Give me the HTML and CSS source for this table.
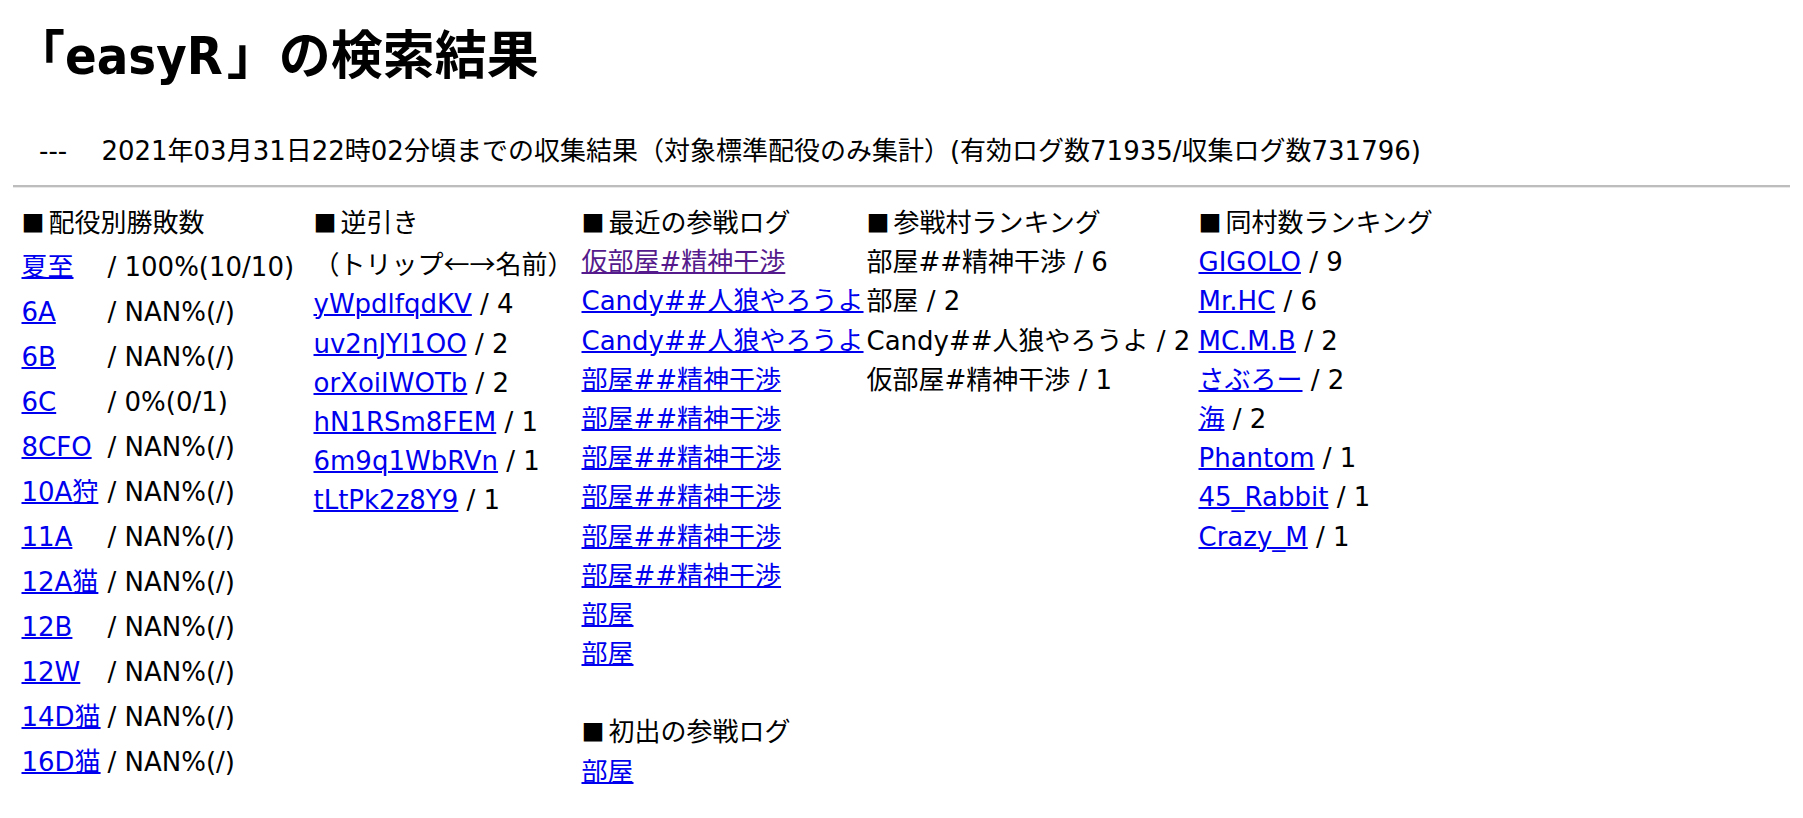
FILE: index.html
```html
<!DOCTYPE html>
<html lang="ja">
<head>
<meta charset="utf-8">
<title>「easyR」の検索結果</title>
<link rel="stylesheet" href="styles.css">
</head>
<body>
<h1 class="title">「<span class="latin">easyR</span>」の検索結果</h1>
<p class="info">　---　 2021年03月31日22時02分頃までの収集結果（対象標準配役のみ集計）(有効ログ数71935/収集ログ数731796)</p>
<hr class="rule">
<div class="cols">
  <section class="col">
    <div class="head"><span class="mark">■</span>配役別勝敗数</div>
    <div class="roles">
      <a href="#">夏至</a><span>/ 100%(10/10)</span>
      <a href="#">6A</a><span>/ NAN%(/)</span>
      <a href="#">6B</a><span>/ NAN%(/)</span>
      <a href="#">6C</a><span>/ 0%(0/1)</span>
      <a href="#">8CFO</a><span>/ NAN%(/)</span>
      <a href="#">10A狩</a><span>/ NAN%(/)</span>
      <a href="#">11A</a><span>/ NAN%(/)</span>
      <a href="#">12A猫</a><span>/ NAN%(/)</span>
      <a href="#">12B</a><span>/ NAN%(/)</span>
      <a href="#">12W</a><span>/ NAN%(/)</span>
      <a href="#">14D猫</a><span>/ NAN%(/)</span>
      <a href="#">16D猫</a><span>/ NAN%(/)</span>
    </div>
  </section>
  <section class="col">
    <div class="head"><span class="mark">■</span>逆引き</div>
    <div class="list">
      <div>（トリップ<span class="cj">←→</span>名前）</div>
      <div><a href="#">yWpdlfqdKV</a> / 4</div>
      <div><a href="#">uv2nJYl1OO</a> / 2</div>
      <div><a href="#">orXoiIWOTb</a> / 2</div>
      <div><a href="#">hN1RSm8FEM</a> / 1</div>
      <div><a href="#">6m9q1WbRVn</a> / 1</div>
      <div><a href="#">tLtPk2z8Y9</a> / 1</div>
    </div>
  </section>
  <section class="col">
    <div class="head"><span class="mark">■</span>最近の参戦ログ</div>
    <div class="list">
      <a class="visited" href="#">仮部屋#精神干渉</a>
      <a href="#">Candy##人狼やろうよ</a>
      <a href="#">Candy##人狼やろうよ</a>
      <a href="#">部屋##精神干渉</a>
      <a href="#">部屋##精神干渉</a>
      <a href="#">部屋##精神干渉</a>
      <a href="#">部屋##精神干渉</a>
      <a href="#">部屋##精神干渉</a>
      <a href="#">部屋##精神干渉</a>
      <a href="#">部屋</a>
      <a href="#">部屋</a>
    </div>
    <div class="head gap"><span class="mark">■</span>初出の参戦ログ</div>
    <div class="list">
      <a href="#">部屋</a>
    </div>
  </section>
  <section class="col">
    <div class="head"><span class="mark">■</span>参戦村ランキング</div>
    <div class="list">
      <div>部屋##精神干渉 / 6</div>
      <div>部屋 / 2</div>
      <div>Candy##人狼やろうよ / 2</div>
      <div>仮部屋#精神干渉 / 1</div>
    </div>
  </section>
  <section class="col">
    <div class="head"><span class="mark">■</span>同村数ランキング</div>
    <div class="list">
      <div><a href="#">GIGOLO</a> / 9</div>
      <div><a href="#">Mr.HC</a> / 6</div>
      <div><a href="#">MC.M.B</a> / 2</div>
      <div><a href="#">さぶろー</a> / 2</div>
      <div><a href="#">海</a> / 2</div>
      <div><a href="#">Phantom</a> / 1</div>
      <div><a href="#">45_Rabbit</a> / 1</div>
      <div><a href="#">Crazy_M</a> / 1</div>
    </div>
  </section>
</div>
</body>
</html>
```

FILE: styles.css
```css
html {
  background: #ffffff;
}

body {
  margin: 0;
  padding: 0 13px;
  font-family: "DejaVu Sans", "Noto Sans CJK JP", sans-serif;
  font-size: 26px;
  color: #000000;
}

.title {
  margin: 17px 0 0;
  font-size: 52px;
  line-height: 78px;
  font-weight: bold;
}

.title .latin {
  font-family: "DejaVu Sans Condensed", "DejaVu Sans", sans-serif;
  font-stretch: condensed;
  margin-right: 4px;
}

.info {
  margin: 36.5px 0 0;
  line-height: 39px;
  white-space: nowrap;
}

.rule {
  margin: 14.5px 0 0;
  height: 0;
  border: 0;
  border-top: 2px solid #bdbdbd;
  border-bottom: 1px solid #e8e8e8;
}

.cols {
  display: grid;
  grid-template-columns: 292px 268px 285px 332px auto;
  align-items: start;
  margin-top: 15px;
  padding-left: 8.5px;
}

.col {
  line-height: 39.2px;
  white-space: nowrap;
}

.mark {
  font-family: "Noto Sans CJK JP", sans-serif;
  font-size: 23px;
  margin-right: 4px;
}

.cj {
  font-family: "Noto Sans CJK JP", sans-serif;
}

.roles {
  display: grid;
  grid-template-columns: 86px auto;
  justify-items: start;
  line-height: 45px;
  margin-top: 2px;
}

.list {
  display: flex;
  flex-direction: column;
  align-items: flex-start;
}

.gap {
  margin-top: 38px;
}

a {
  color: #0000ee;
  text-decoration-thickness: 2px;
}

a.visited {
  color: #551a8b;
}
```
